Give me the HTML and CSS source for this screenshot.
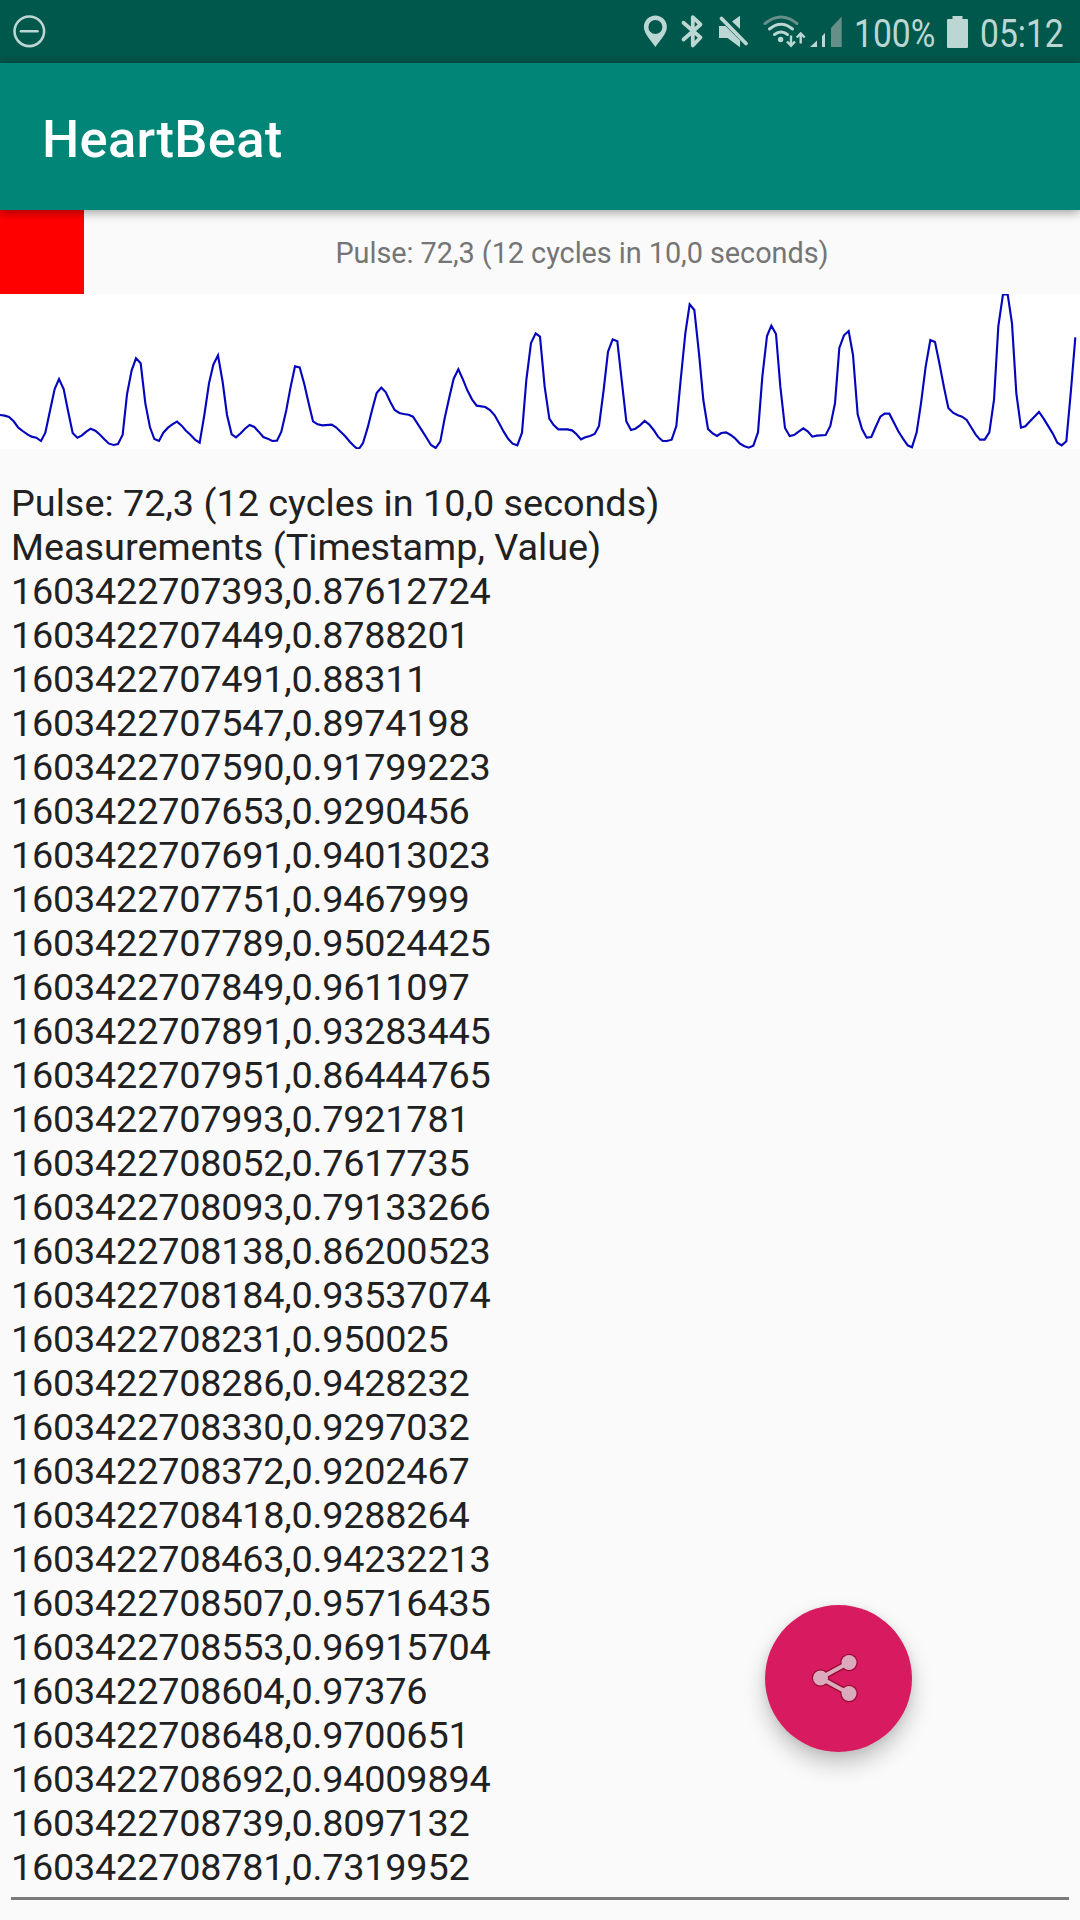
FILE: index.html
```html
<!DOCTYPE html>
<html lang="en">
<head>
<meta charset="utf-8">
<title>HeartBeat</title>
<link rel="stylesheet" href="styles.css">
</head>
<body>
<div class="screen">
  <div class="status-bar">
    <svg class="dnd" width="34" height="34" viewBox="0 0 34 34"><circle cx="17.300" cy="17.300" r="14.800"/><path d="M9 17.300h16.500"/></svg>
    <div class="status-right">
      <svg class="status-icons" width="204" height="63" viewBox="640 0 204 63">
        <path fill-rule="evenodd" d="M655.4 15.500c-6.400 0-11.500 5-11.500 11.300 0 7.500 7 13.300 11.500 20.200 4.500-6.900 11.500-12.700 11.500-20.200 0-6.300-5.100-11.300-11.500-11.300zm0 4.500a7 7 0 1 1 0 14 7 7 0 0 1 0-14z"/>
        <path class="line bold" d="M683.500 22.800 700.500 37.500 692.800 45.500V17.200L700.500 24.500 683.500 39.500"/>
        <path d="M719 26h6.500L740 40.500V47.300L727.500 38H719zM732 21.500 740 15.700V29z"/>
        <path class="line bold" d="M721.500 18.500 746 43.500"/>
        <path class="line dim" d="M765 23.500Q781 10.500 797 23.500"/>
        <path class="line" d="M769.500 29Q781 19.500 792.500 29M774.500 34.500Q781 29.500 787.500 34.500"/>
        <circle cx="780.600" cy="39.500" r="2.700"/>
        <path class="thin" d="M791 35.500V45M787 41.500 791 45.800 795 41.500M800.700 43.500V34M796.700 37.500 800.700 33.500 804.700 37.500"/>
        <path d="M810 47 817 40.500V47zM822 36 825 33V47h-3z"/>
        <path class="shade" d="M831 28 841.700 16.500V47H831z"/>
      </svg>
      <span class="percent"><span class="narrow">100%</span></span>
      <svg class="battery" width="21" height="32" viewBox="0 0 21 32"><path d="M5.500 0h10v3H20q1 0 1 1v27q0 1-1 1H1q-1 0-1-1V4q0-1 1-1h4.500z"/></svg>
      <span class="clock"><span class="narrow">05:12</span></span>
    </div>
  </div>
  <header class="app-bar"><h1>HeartBeat</h1></header>
  <section class="summary">
    <div class="preview"></div>
    <div class="pulse">Pulse: 72,3 (12 cycles in 10,0 seconds)</div>
  </section>
  <svg class="chart" viewBox="0 282 3240 465" preserveAspectRatio="none">
    <polyline points="0,645 14,647 27,651 41,664 55,683 68,693 82,703 95,710 109,713 123,723 136,698 150,632 164,567 177,537 191,567 204,632 218,699 232,713 245,707 259,695 272,686 286,692 300,704 313,718 327,731 341,735 354,732 368,704 381,583 395,511 408,475 422,490 436,610 450,682 463,717 477,723 490,698 504,683 517,673 531,665 545,677 558,692 572,705 586,720 599,728 613,645 627,550 640,494 654,466 668,546 681,645 695,703 708,712 722,700 735,686 749,675 763,681 776,695 790,711 803,716 817,723 831,722 844,695 859,630 871,565 885,499 899,502 913,553 926,610 939,664 953,673 967,676 995,674 1008,682 1035,708 1050,726 1062,738 1070,745 1078,745 1089,729 1103,683 1117,627 1130,579 1144,563 1157,576 1171,606 1184,630 1198,639 1211,642 1226,644 1239,650 1252,670 1266,692 1280,714 1293,735 1307,744 1321,724 1334,655 1348,592 1361,536 1375,508 1389,539 1402,571 1416,598 1430,617 1456,621 1470,630 1484,646 1497,669 1511,695 1525,717 1538,731 1552,736 1566,698 1579,540 1593,429 1607,400 1620,410 1634,560 1648,656 1661,675 1675,688 1702,688 1716,691 1729,702 1743,718 1756,712 1770,708 1784,702 1797,678 1811,570 1824,455 1838,418 1852,424 1865,540 1879,664 1893,690 1906,686 1920,676 1934,663 1947,673 1961,690 1974,710 1988,723 2001,723 2015,719 2029,678 2042,540 2056,400 2069,313 2083,330 2097,460 2110,600 2124,687 2138,700 2151,708 2164,699 2178,697 2192,705 2205,715 2219,730 2232,738 2246,743 2260,737 2274,697 2287,530 2301,408 2314,377 2328,402 2341,560 2355,684 2369,708 2382,705 2396,695 2410,685 2423,694 2437,710 2450,707 2477,705 2491,678 2505,610 2518,444 2532,406 2546,393 2559,465 2573,643 2586,687 2600,713 2614,711 2627,681 2641,650 2654,641 2668,641 2682,668 2695,694 2709,716 2723,736 2736,742 2750,697 2763,610 2777,500 2791,420 2805,426 2818,489 2832,562 2845,624 2859,638 2872,645 2886,650 2900,660 2913,681 2927,704 2940,719 2954,719 2968,697 2982,600 2995,378 3009,283 3023,283 3036,370 3049,580 3063,683 3076,679 3090,664 3117,636 3131,656 3158,700 3172,728 3185,736 3199,724 3213,570 3226,412"/>
  </svg>
  <main class="log"><span class="log-title">Pulse: 72,3 (12 cycles in 10,0 seconds)
Measurements (Timestamp, Value)</span>
1603422707393,0.87612724
1603422707449,0.8788201
1603422707491,0.88311
1603422707547,0.8974198
1603422707590,0.91799223
1603422707653,0.9290456
1603422707691,0.94013023
1603422707751,0.9467999
1603422707789,0.95024425
1603422707849,0.9611097
1603422707891,0.93283445
1603422707951,0.86444765
1603422707993,0.7921781
1603422708052,0.7617735
1603422708093,0.79133266
1603422708138,0.86200523
1603422708184,0.93537074
1603422708231,0.950025
1603422708286,0.9428232
1603422708330,0.9297032
1603422708372,0.9202467
1603422708418,0.9288264
1603422708463,0.94232213
1603422708507,0.95716435
1603422708553,0.96915704
1603422708604,0.97376
1603422708648,0.9700651
1603422708692,0.94009894
1603422708739,0.8097132
1603422708781,0.7319952</main>
  <button class="fab" aria-label="Share">
    <svg width="48" height="50" viewBox="0 0 48 50">
      <g class="share-edge"><path d="M9.500 25 38 9.500M9.500 25 38 40.500"/><circle cx="9.500" cy="25" r="8.700"/><circle cx="38" cy="9.500" r="8.700"/><circle cx="38" cy="40.500" r="8.700"/></g>
      <g class="share-face"><path d="M9.500 25 38 9.500M9.500 25 38 40.500"/><circle cx="9.500" cy="25" r="7.500"/><circle cx="38" cy="9.500" r="7.500"/><circle cx="38" cy="40.500" r="7.500"/></g>
    </svg>
  </button>
</div>
</body>
</html>
```
FILE: styles.css
```css
* { box-sizing: border-box; }
body { margin: 0; background: #fafafa; font-family: Roboto, "Liberation Sans", sans-serif; }
.screen { position: relative; display: flex; flex-direction: column; width: 1080px; height: 1920px; overflow: hidden; }

.status-bar { flex: none; display: flex; justify-content: space-between; height: 63px; padding: 0 15px 0 12px; background: #00574b; color: #bcd7d3; }
.dnd { align-self: flex-start; margin-top: 14px; fill: none; stroke: #bcd7d3; stroke-width: 2.6; stroke-linecap: round; }
.status-right { display: flex; align-items: flex-start; }
.status-icons { fill: #bcd7d3; }
.line { fill: none; stroke: #bcd7d3; stroke-width: 3; stroke-linecap: round; stroke-linejoin: round; }
.bold { stroke-width: 3.8; }
.thin { fill: none; stroke: #bcd7d3; stroke-width: 2.4; }
.dim { stroke: #668f89; }
.status-icons .shade { fill: #668f89; }
.percent, .clock { font-size: 38.5px; line-height: 67px; white-space: nowrap; }
.percent { width: 80px; margin-left: 10px; }
.clock { width: 85px; margin-left: 12px; }
.narrow { display: inline-block; transform: scaleX(.873); transform-origin: left; }
.battery { margin: 16px 0 0 13px; fill: #bcd7d3; }

.app-bar { flex: none; position: relative; z-index: 1; display: flex; align-items: center; height: 147px; padding: 4px 42px 0; background: #008577; box-shadow: 0 2px 10px rgba(0,0,0,.4); }
.app-bar h1 { margin: 0; color: #fff; font-size: 52.5px; font-weight: 500; line-height: 62px; letter-spacing: .27px; }

.summary { flex: none; display: flex; height: 84px; }
.preview { width: 84px; background: #f00; }
.pulse { flex: 1; text-align: center; color: #757575; font-size: 28.875px; line-height: 86px; letter-spacing: -.05px; }
.chart { flex: none; display: block; width: 1080px; height: 155px; background: #fff; }
.chart polyline { fill: none; stroke: #0505bd; stroke-width: 6.4; stroke-linejoin: miter; }

.log { flex: none; height: 1419px; margin: 32px 11px 0; border-bottom: 3px solid #7a7a7a; color: #212121; font-size: 37.8px; line-height: 44px; letter-spacing: -.22px; white-space: pre; }
.log-title { letter-spacing: 0; }

.fab { position: absolute; left: 765px; top: 1605px; display: flex; align-items: center; justify-content: center; width: 147px; height: 147px; padding: 0 6.6px 1.6px 0; border: 0; border-radius: 50%; background: #d81b60; box-shadow: 0 12px 22px rgba(0,0,0,.22), 0 2px 8px rgba(0,0,0,.08); }
.share-edge { fill: #9b0b34; stroke: #9b0b34; stroke-width: 7; }
.share-face { fill: #dcaabd; stroke: #dcaabd; stroke-width: 4; }
.share-edge circle, .share-face circle { stroke: none; }
```
